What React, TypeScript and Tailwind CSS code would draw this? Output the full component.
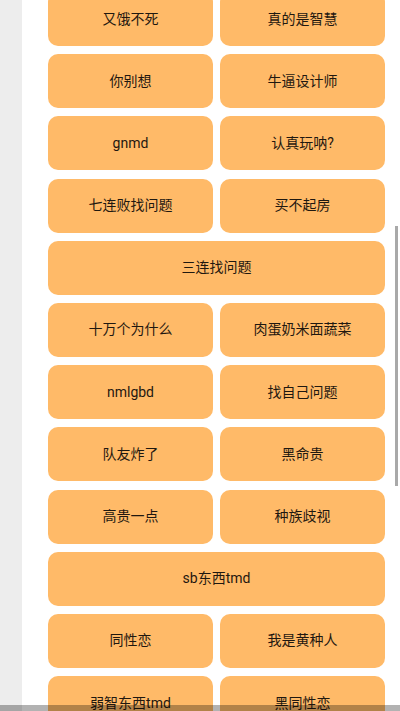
const ROWS: string[][] = [
  ['又饿不死', '真的是智慧'],
  ['你别想', '牛逼设计师'],
  ['gnmd', '认真玩呐?'],
  ['七连败找问题', '买不起房'],
  ['三连找问题'],
  ['十万个为什么', '肉蛋奶米面蔬菜'],
  ['nmlgbd', '找自己问题'],
  ['队友炸了', '黑命贵'],
  ['高贵一点', '种族歧视'],
  ['sb东西tmd'],
  ['同性恋', '我是黄种人'],
  ['弱智东西tmd', '黑同性恋'],
];

function PhraseButton({ label, wide }: { label: string; wide?: boolean }) {
  return (
    <button
      className={
        (wide ? 'col-span-2 ' : '') +
        'flex h-[54px] items-center justify-center rounded-[10px] bg-[#ffba68] text-[14px] text-[#1f1810]'
      }
    >
      {label}
    </button>
  );
}

export default function App() {
  return (
    <div
      className="relative flex h-[711px] w-[400px] overflow-hidden bg-white"
      style={{ fontFamily: 'Roboto, "Noto Sans CJK SC", sans-serif' }}
    >
      <div className="w-[22px] shrink-0 bg-[#ededed]" />
      <div className="pl-[26px]">
        <div className="-mt-[8px] grid grid-cols-[165px_165px] gap-x-[7px] gap-y-[8.2px]">
          {ROWS.map((row, i) =>
            row.length === 1 ? (
              <PhraseButton key={i} label={row[0]} wide />
            ) : (
              row.map((label) => <PhraseButton key={label} label={label} />)
            )
          )}
        </div>
      </div>

      {/* scrollbar thumb */}
      <div className="absolute left-[395px] top-[226px] h-[260px] w-[3px] bg-[#a9a9a9]" />
      {/* system nav bar edge */}
      <div className="absolute bottom-0 left-0 h-[6px] w-full bg-black/30" />
    </div>
  );
}
